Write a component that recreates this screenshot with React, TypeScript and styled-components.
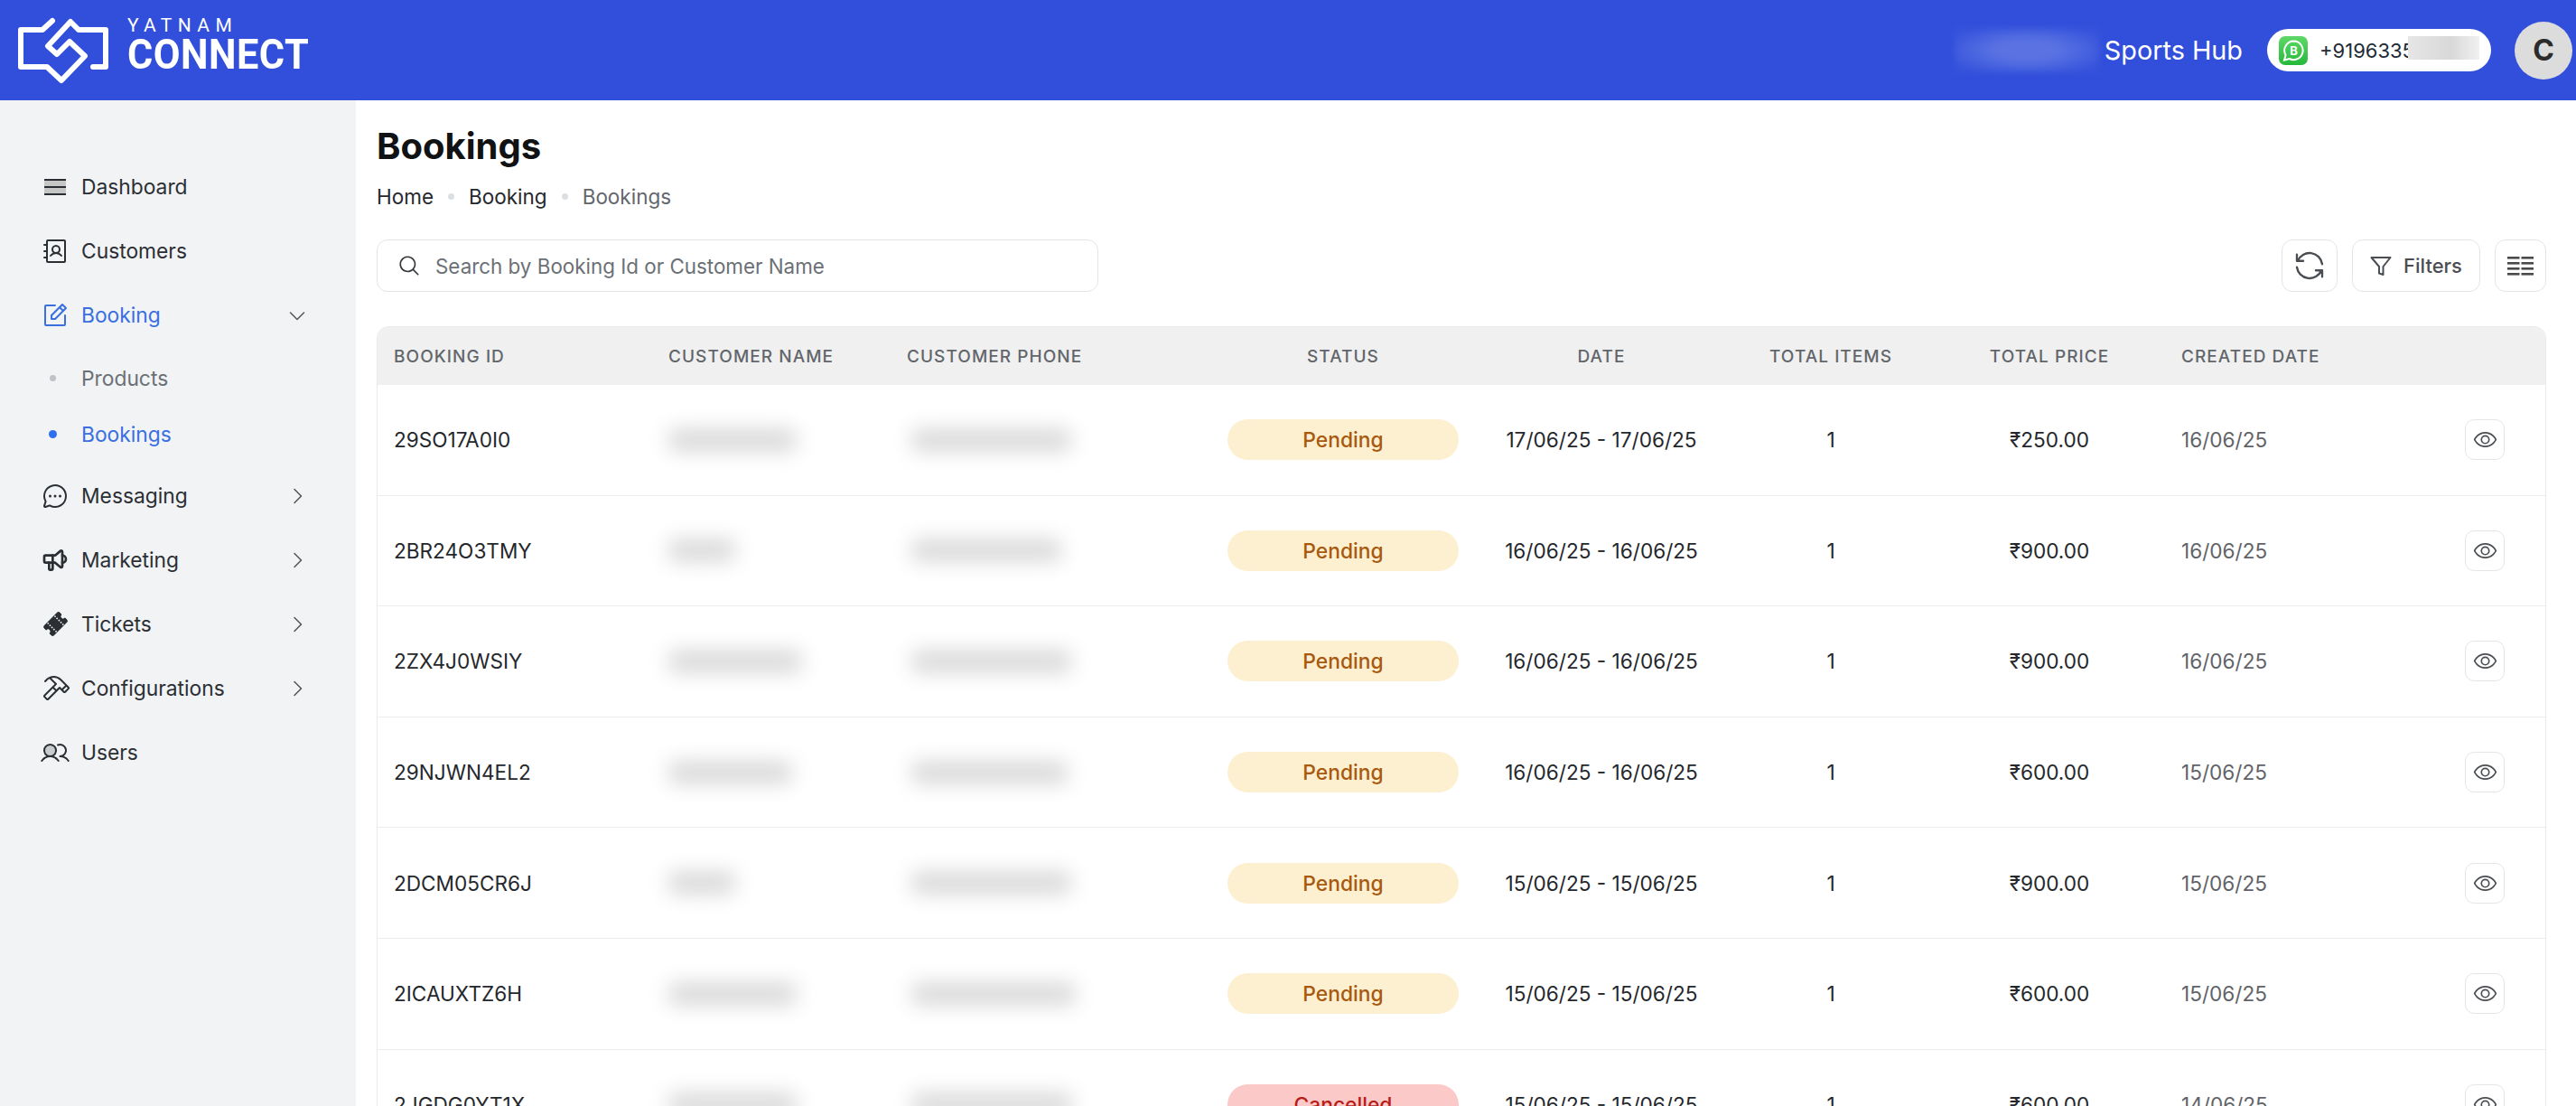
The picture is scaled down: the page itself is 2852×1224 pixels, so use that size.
import styled, { createGlobalStyle } from 'styled-components';
import { ReactNode } from 'react';
import {
  PiAddressBook,
  PiCaretDown,
  PiCaretRight,
  PiChatCircleDots,
  PiEye,
  PiHammer,
  PiMagnifyingGlass,
  PiNotePencil,
  PiUsersDuotone,
} from 'react-icons/pi';
import { TbRefresh, TbSpeakerphone } from 'react-icons/tb';
import { BsTicketPerforatedFill } from 'react-icons/bs';

const GlobalStyle = createGlobalStyle`
  * { box-sizing: border-box; }
  html, body { margin: 0; padding: 0; }
  body {
    font-family: Inter, "Noto Sans", sans-serif;
    color: #212b36;
    background: #fff;
  }
`;

const Page = styled.div`
  width: 100vw;
  height: 100vh;
  overflow: hidden;
  display: flex;
  flex-direction: column;
`;

const TopBar = styled.header`
  height: 111px;
  flex: none;
  background: #314fdb;
  display: flex;
  align-items: center;
  justify-content: space-between;
  padding: 0 4px 0 20px;
`;

const Brand = styled.div`
  display: flex;
  align-items: center;
  gap: 21px;
  color: #fff;
`;

const BrandText = styled.div`
  display: flex;
  flex-direction: column;
  font-family: Roboto, sans-serif;
  margin-bottom: 16px;
`;

const BrandSmall = styled.span`
  font-size: 21px;
  line-height: 24px;
  letter-spacing: 6.4px;
  font-weight: 400;
`;

const BrandBig = styled.span`
  font-size: 46px;
  line-height: 40px;
  font-weight: 700;
  letter-spacing: 0.5px;
  transform: scaleX(0.94);
  transform-origin: left center;
`;

const TopRight = styled.div`
  display: flex;
  align-items: center;
`;

const Smudge = styled.div`
  width: 160px;
  height: 49px;
  background: radial-gradient(ellipse at center, #5a72e2 30%, #3654dc 85%);
  filter: blur(3px);
`;

const ShopName = styled.span`
  color: #fff;
  font-size: 28.8px;
  margin: 0 27px 0 6px;
`;

const PhonePill = styled.div`
  position: relative;
  width: 248px;
  height: 47px;
  border-radius: 24px;
  background: #fff;
  display: flex;
  align-items: center;
  padding-left: 13px;
  gap: 13px;
  font-size: 22px;
  color: #212b36;
  margin-right: 26px;
`;

const PhoneMask = styled.div`
  position: absolute;
  left: 156px;
  top: 8px;
  width: 79px;
  height: 26px;
  background: linear-gradient(90deg, #e6e6e6, #d8d8d8 60%, #f1f1f1);
`;

const Avatar = styled.div`
  width: 64px;
  height: 64px;
  border-radius: 50%;
  background: #dcdcdc;
  display: flex;
  align-items: center;
  justify-content: center;
  font-size: 32px;
  font-weight: 700;
  color: #2b2b2b;
`;

const Body = styled.div`
  flex: 1;
  min-height: 0;
  display: flex;
`;

const Sidebar = styled.nav`
  width: 394px;
  flex: none;
  background: #f1f3f5;
  padding: 60px 0 0 49px;
`;

const NavRow = styled.div<{ $active?: boolean }>`
  height: 71px;
  width: 292px;
  display: flex;
  align-items: center;
  font-size: 22.8px;
  font-weight: 400;
  color: ${(p) => (p.$active ? '#3a6fe0' : '#2b2f33')};
`;

const NavIcon = styled.span`
  width: 24px;
  height: 24px;
  margin-right: 17px;
  display: flex;
  align-items: center;
  justify-content: center;
  flex: none;
  font-size: 32px;

  svg {
    flex: none;
  }
`;

const TicketIcon = styled(BsTicketPerforatedFill)`
  font-size: 25px;
  transform: rotate(-45deg);
`;

const NavLabel = styled.span`
  flex: 1;
`;

const Caret = styled.span`
  display: flex;
  color: #555;
  font-size: 24px;
`;

const SubList = styled.div`
  padding: 3px 0 2px;
`;

const SubRow = styled.div<{ $active?: boolean }>`
  height: 62px;
  display: flex;
  align-items: center;
  font-size: 22.8px;
  font-weight: 400;
  color: ${(p) => (p.$active ? '#3a6fe0' : '#6b7076')};
`;

const SubDot = styled.span<{ $active?: boolean }>`
  width: 41px;
  flex: none;
  display: flex;
  padding-left: ${(p) => (p.$active ? 5 : 6)}px;

  &::before {
    content: '';
    width: ${(p) => (p.$active ? 9 : 7)}px;
    height: ${(p) => (p.$active ? 9 : 7)}px;
    border-radius: 50%;
    background: ${(p) => (p.$active ? '#2f6fed' : '#bfc2c6')};
  }
`;

const Main = styled.main`
  flex: 1;
  min-width: 0;
  padding: 29px 33px 0 23px;
`;

const Title = styled.h1`
  margin: 0;
  font-size: 40px;
  line-height: 44px;
  font-weight: 700;
  color: #101214;
`;

const Crumbs = styled.div`
  margin-top: 17px;
  height: 32px;
  display: flex;
  align-items: center;
  font-size: 22.5px;
`;

const Crumb = styled.span<{ $last?: boolean }>`
  color: ${(p) => (p.$last ? '#63676c' : '#25282c')};
`;

const CrumbDot = styled.span`
  width: 7px;
  height: 7px;
  border-radius: 50%;
  background: #dcdfe2;
  margin: 0 16px;
`;

const Toolbar = styled.div`
  margin-top: 32px;
  height: 58px;
  display: flex;
  align-items: stretch;
  gap: 16px;
`;

const SearchBox = styled.div`
  width: 799px;
  border: 1px solid #e3e5e8;
  border-radius: 12px;
  display: flex;
  align-items: center;
  padding-left: 22px;
  gap: 16px;
  margin-right: auto;
  font-size: 22.4px;
  color: #6b7076;
`;

const ToolButton = styled.div<{ $w: number }>`
  width: ${(p) => p.$w}px;
  border: 1px solid #e3e5e8;
  border-radius: 12px;
  display: flex;
  align-items: center;
  justify-content: center;
  gap: 13px;
  font-size: 22px;
  font-weight: 500;
  color: #4a4e53;
`;

const Table = styled.div`
  margin-top: 38px;
  border: 1px solid #e8eaec;
  border-bottom: none;
  border-radius: 14px 14px 0 0;
  overflow: hidden;
`;

const columns = '304px 264px 355px 292px 280px 228px 256px 263px 1fr';

const HeadRow = styled.div`
  height: 64px;
  display: grid;
  grid-template-columns: ${columns};
  align-items: center;
  background: #f0f0f0;
  font-size: 19px;
  font-weight: 500;
  letter-spacing: 1.05px;
  color: #62666b;
`;

const Row = styled.div`
  height: 122.6px;
  display: grid;
  grid-template-columns: ${columns};
  align-items: center;
  border-bottom: 1px solid #ebedef;
  font-size: 22.6px;
  color: #24272b;
`;

const Cell = styled.div<{ $center?: boolean; $muted?: boolean }>`
  padding: 0 18px;
  white-space: nowrap;
  text-align: ${(p) => (p.$center ? 'center' : 'left')};
  color: ${(p) => (p.$muted ? '#5f6368' : 'inherit')};
`;

const ActionCell = styled.div`
  display: flex;
  justify-content: flex-end;
  padding-right: 45px;
`;

const Blurred = styled.div<{ $w: number; $indent: number }>`
  width: ${(p) => p.$w}px;
  height: 26px;
  margin-left: ${(p) => p.$indent}px;
  background: #dadada;
  border-radius: 8px;
  filter: blur(11px);
`;

const Pill = styled.div<{ $cancelled?: boolean }>`
  width: 256px;
  height: 45px;
  border-radius: 23px;
  margin: 0 auto;
  display: flex;
  align-items: center;
  justify-content: center;
  font-size: 22.8px;
  font-weight: 500;
  background: ${(p) => (p.$cancelled ? '#fcc9c9' : '#fdf0d0')};
  color: ${(p) => (p.$cancelled ? '#b71d18' : '#a8590f')};
`;

const EyeButton = styled.div`
  width: 44px;
  height: 45px;
  border: 1px solid #e3e5e8;
  border-radius: 10px;
  display: flex;
  align-items: center;
  justify-content: center;
  font-size: 27px;
  color: #4a4e53;
`;

function LogoMark() {
  return (
    <svg width="100" height="74" viewBox="20 18 100 74" fill="none" stroke="#fff" strokeWidth="6" strokeLinecap="round" strokeLinejoin="round">
      <path d="M58 22 L47 32 H23 V73 H52 L68 88 L94 61 L77 45 L63 59 L53 50 L78 23 L87 32 H117 V73 H103" />
    </svg>
  );
}

function WhatsappBusiness() {
  return (
    <svg width="32" height="32" viewBox="0 0 32 32">
      <defs>
        <linearGradient id="wa" x1="0" y1="0" x2="0" y2="1">
          <stop offset="0" stopColor="#5fd868" />
          <stop offset="1" stopColor="#25b83a" />
        </linearGradient>
      </defs>
      <rect width="32" height="32" rx="7" fill="url(#wa)" />
      <path d="M16.5 5.5a10.3 10.3 0 0 0-8.9 15.4L6 26.5l5.7-1.5A10.3 10.3 0 1 0 16.5 5.5z" fill="none" stroke="#fff" strokeWidth="2" />
      <text x="16.5" y="20.5" textAnchor="middle" fontSize="13" fontWeight="700" fill="#fff" fontFamily="Inter, sans-serif">B</text>
    </svg>
  );
}

function DashIcon() {
  return (
    <svg width="24" height="18" viewBox="0 0 24 18">
      <rect y="2" width="24" height="14" fill="#c6c6c6" />
      <rect y="0" width="24" height="2" fill="#2a2d31" />
      <rect y="8" width="24" height="2" fill="#2a2d31" />
      <rect y="16" width="24" height="2" fill="#2a2d31" />
    </svg>
  );
}

function FunnelIcon() {
  return (
    <svg width="24" height="23" viewBox="0 0 24 23" fill="none" stroke="currentColor" strokeWidth="2" strokeLinejoin="round">
      <path d="M1.5 2 H22.5 L14.5 12 V21 L10 19.5 V12 Z" />
    </svg>
  );
}

function ColumnsIcon() {
  return (
    <svg width="29" height="21" viewBox="0 0 29 21" fill="#4a4a4a">
      {[0, 6, 12, 18].map((y) => (
        <g key={y}>
          <rect y={y} width="13.5" height="2.6" />
          <rect x="15.5" y={y} width="13.5" height="2.6" />
        </g>
      ))}
    </svg>
  );
}

type NavItem = { label: string; icon: ReactNode; caret?: boolean };

const navTop: NavItem[] = [
  { label: 'Dashboard', icon: <DashIcon /> },
  { label: 'Customers', icon: <PiAddressBook /> },
];

const navBottom: NavItem[] = [
  { label: 'Messaging', icon: <PiChatCircleDots />, caret: true },
  { label: 'Marketing', icon: <TbSpeakerphone />, caret: true },
  { label: 'Tickets', icon: <TicketIcon />, caret: true },
  { label: 'Configurations', icon: <PiHammer />, caret: true },
  { label: 'Users', icon: <PiUsersDuotone /> },
];

const bookings = [
  { id: '29SO17A0I0', name: 142, phone: 177, date: '17/06/25 - 17/06/25', price: '₹250.00', created: '16/06/25' },
  { id: '2BR24O3TMY', name: 74, phone: 166, date: '16/06/25 - 16/06/25', price: '₹900.00', created: '16/06/25' },
  { id: '2ZX4J0WSIY', name: 148, phone: 177, date: '16/06/25 - 16/06/25', price: '₹900.00', created: '16/06/25' },
  { id: '29NJWN4EL2', name: 137, phone: 173, date: '16/06/25 - 16/06/25', price: '₹600.00', created: '15/06/25' },
  { id: '2DCM05CR6J', name: 74, phone: 177, date: '15/06/25 - 15/06/25', price: '₹900.00', created: '15/06/25' },
  { id: '2ICAUXTZ6H', name: 142, phone: 182, date: '15/06/25 - 15/06/25', price: '₹600.00', created: '15/06/25' },
  { id: '2JGDG0YT1X', name: 142, phone: 178, date: '15/06/25 - 15/06/25', price: '₹600.00', created: '14/06/25', cancelled: true },
];

function renderNav(item: NavItem) {
  return (
    <NavRow key={item.label}>
      <NavIcon>{item.icon}</NavIcon>
      <NavLabel>{item.label}</NavLabel>
      {item.caret && (
        <Caret>
          <PiCaretRight />
        </Caret>
      )}
    </NavRow>
  );
}

function App() {
  return (
    <Page>
      <GlobalStyle />
      <TopBar>
        <Brand>
          <LogoMark />
          <BrandText>
            <BrandSmall>YATNAM</BrandSmall>
            <BrandBig>CONNECT</BrandBig>
          </BrandText>
        </Brand>
        <TopRight>
          <Smudge />
          <ShopName>Sports Hub</ShopName>
          <PhonePill>
            <WhatsappBusiness />
            +9196335
            <PhoneMask />
          </PhonePill>
          <Avatar>C</Avatar>
        </TopRight>
      </TopBar>
      <Body>
        <Sidebar>
          {navTop.map(renderNav)}
          <NavRow $active>
            <NavIcon>
              <PiNotePencil />
            </NavIcon>
            <NavLabel>Booking</NavLabel>
            <Caret>
              <PiCaretDown />
            </Caret>
          </NavRow>
          <SubList>
            <SubRow>
              <SubDot />
              Products
            </SubRow>
            <SubRow $active>
              <SubDot $active />
              Bookings
            </SubRow>
          </SubList>
          {navBottom.map(renderNav)}
        </Sidebar>
        <Main>
          <Title>Bookings</Title>
          <Crumbs>
            <Crumb>Home</Crumb>
            <CrumbDot />
            <Crumb>Booking</Crumb>
            <CrumbDot />
            <Crumb $last>Bookings</Crumb>
          </Crumbs>
          <Toolbar>
            <SearchBox>
              <PiMagnifyingGlass size={26} color="#33373b" />
              Search by Booking Id or Customer Name
            </SearchBox>
            <ToolButton $w={62}>
              <TbRefresh size={42} strokeWidth={1.35} />
            </ToolButton>
            <ToolButton $w={142}>
              <FunnelIcon />
              Filters
            </ToolButton>
            <ToolButton $w={57}>
              <ColumnsIcon />
            </ToolButton>
          </Toolbar>
          <Table>
            <HeadRow>
              <Cell>BOOKING ID</Cell>
              <Cell>CUSTOMER NAME</Cell>
              <Cell>CUSTOMER PHONE</Cell>
              <Cell $center>STATUS</Cell>
              <Cell $center>DATE</Cell>
              <Cell $center>TOTAL ITEMS</Cell>
              <Cell $center>TOTAL PRICE</Cell>
              <Cell>CREATED DATE</Cell>
              <Cell />
            </HeadRow>
            {bookings.map((b) => (
              <Row key={b.id}>
                <Cell>{b.id}</Cell>
                <Cell>
                  <Blurred $w={b.name} $indent={0} />
                </Cell>
                <Cell>
                  <Blurred $w={b.phone} $indent={5} />
                </Cell>
                <Cell>
                  <Pill $cancelled={b.cancelled}>{b.cancelled ? 'Cancelled' : 'Pending'}</Pill>
                </Cell>
                <Cell $center>{b.date}</Cell>
                <Cell $center>1</Cell>
                <Cell $center>{b.price}</Cell>
                <Cell $muted>{b.created}</Cell>
                <ActionCell>
                  <EyeButton>
                    <PiEye />
                  </EyeButton>
                </ActionCell>
              </Row>
            ))}
          </Table>
        </Main>
      </Body>
    </Page>
  );
}

export default App;
